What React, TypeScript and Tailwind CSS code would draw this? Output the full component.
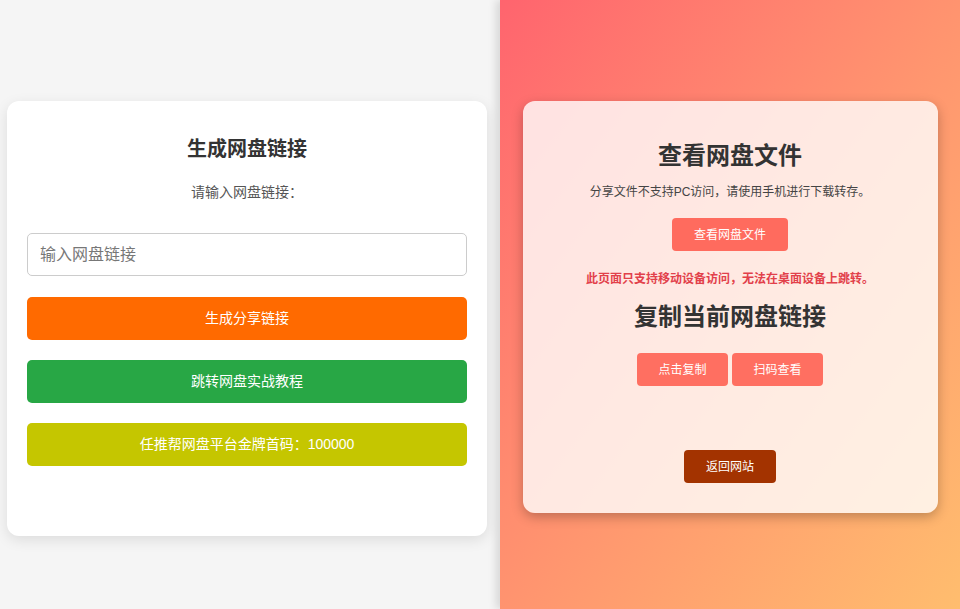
import React from 'react';

const FONT = '"Liberation Sans", "Noto Sans CJK SC", "Noto Sans", sans-serif';

export default function App() {
  return (
    <div className="flex h-[609px] w-[960px] overflow-hidden" style={{ fontFamily: FONT }}>
      {/* Left: link generator */}
      <div className="w-[500px] shrink-0 bg-[#f5f5f5] pt-[101px] pl-[7px]">
        <div className="w-[480px] rounded-xl bg-white px-5 pt-[34px] pb-[70px] shadow-[0_4px_14px_rgba(0,0,0,0.1)]">
          <h2 className="text-center text-[20px] font-bold leading-7 text-[#333]">生成网盘链接</h2>
          <p className="mt-[19px] text-center text-[14px] leading-5 text-[#555]">请输入网盘链接：</p>
          <input
            className="mt-[31px] block h-[43px] w-full rounded-[5px] border border-[#ccc] px-3 text-[16px] text-[#333] outline-none placeholder:text-[#777]"
            placeholder="输入网盘链接"
          />
          <div className="mt-[21px] flex flex-col gap-5">
            <button className="h-[43px] w-full rounded-[5px] bg-[#ff6a00] text-[14px] text-white">生成分享链接</button>
            <button className="h-[43px] w-full rounded-[5px] bg-[#28a745] text-[14px] text-white">跳转网盘实战教程</button>
            <button className="h-[43px] w-full rounded-[5px] bg-[#c5c600] text-[14px] text-white">任推帮网盘平台金牌首码：100000</button>
          </div>
        </div>
      </div>

      {/* Right: mobile-only view */}
      <div className="relative flex-1 bg-linear-to-br from-[#ff646e] to-[#ffbd6e] pt-[101px] shadow-[-4px_0_8px_rgba(0,0,0,0.12)]">
        <div className="mx-auto w-[415px] rounded-xl bg-white/80 px-5 pt-[39px] pb-[30px] text-center shadow-[0_4px_12px_rgba(0,0,0,0.25)]">
          <h2 className="text-[24px] font-bold leading-8 text-[#333]">查看网盘文件</h2>
          <p className="mt-3 text-[12px] leading-4 text-[#444]">分享文件不支持PC访问，请使用手机进行下载转存。</p>
          <button className="mt-[18px] h-[33px] w-[116px] rounded-[4px] bg-[#ff6b5e] text-[12px] text-white">查看网盘文件</button>
          <p className="mt-5 text-[12px] font-bold leading-4 text-[#e2404a]">此页面只支持移动设备访问，无法在桌面设备上跳转。</p>
          <h2 className="mt-[14px] text-[24px] font-bold leading-8 text-[#333]">复制当前网盘链接</h2>
          <div className="mt-5 flex justify-center gap-1">
            <button className="h-[33px] w-[91px] rounded-[4px] bg-[#ff6f61] text-[12px] text-white">点击复制</button>
            <button className="h-[33px] w-[91px] rounded-[4px] bg-[#ff6f61] text-[12px] text-white">扫码查看</button>
          </div>
          <button className="mt-16 h-[33px] w-[92px] rounded-[4px] bg-[#a33300] text-[12px] text-white">返回网站</button>
        </div>
      </div>
    </div>
  );
}
